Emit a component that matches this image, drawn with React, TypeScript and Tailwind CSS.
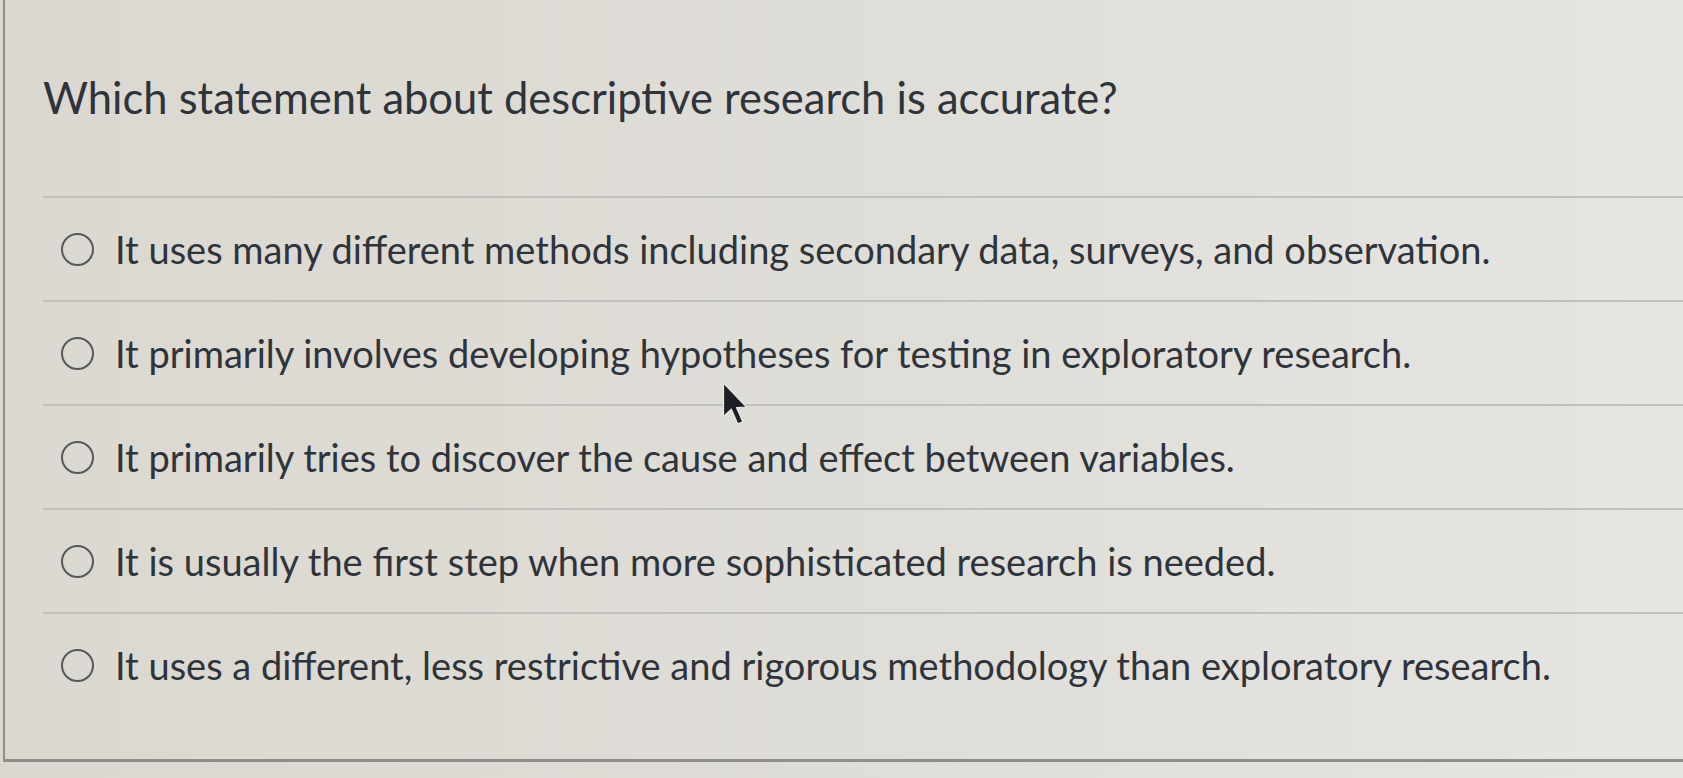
import React from "react";

const options = [
  "It uses many different methods including secondary data, surveys, and observation.",
  "It primarily involves developing hypotheses for testing in exploratory research.",
  "It primarily tries to discover the cause and effect between variables.",
  "It is usually the first step when more sophisticated research is needed.",
  "It uses a different, less restrictive and rigorous methodology than exploratory research.",
];

export default function App() {
  return (
    <div
      className="relative w-full h-[778px] overflow-hidden bg-linear-to-r from-[#dad8d0] via-[#dfddd7] to-[#e5e5e2] text-[#2f343b]"
      style={{ fontFamily: "Lato, 'Open Sans', sans-serif" }}
    >
      <div className="ml-[3px] h-[762px] border-l-2 border-b-[3px] border-[#8f8e8a]">
        <div className="pl-[38px] pt-[73px] text-[43.5px] leading-[48px]">
          Which statement about descriptive research is accurate?
        </div>
        <div className="ml-[38px] mt-[75px]">
          {options.map((o) => (
            <div
              key={o}
              className="flex h-[104px] items-center border-t-2 border-[#c2c0ba] pl-[18px]"
            >
              <span className="h-[33px] w-[33px] shrink-0 rounded-full border-[2.5px] border-[#55585d]" />
              <span className="ml-[21px] text-[38px] leading-[44px]">{o}</span>
            </div>
          ))}
        </div>
      </div>
      <svg
        className="absolute left-[721px] top-[381px]"
        width="28"
        height="46"
        viewBox="0 0 26 44"
      >
        <path
          d="M2 2 L2 34 L9.5 27 L15.5 41 L20.5 39 L14.5 25.5 L24 25 Z"
          fill="#1c1f23"
          stroke="#e8e8e4"
          strokeWidth="1.2"
          strokeLinejoin="round"
        />
      </svg>
    </div>
  );
}
